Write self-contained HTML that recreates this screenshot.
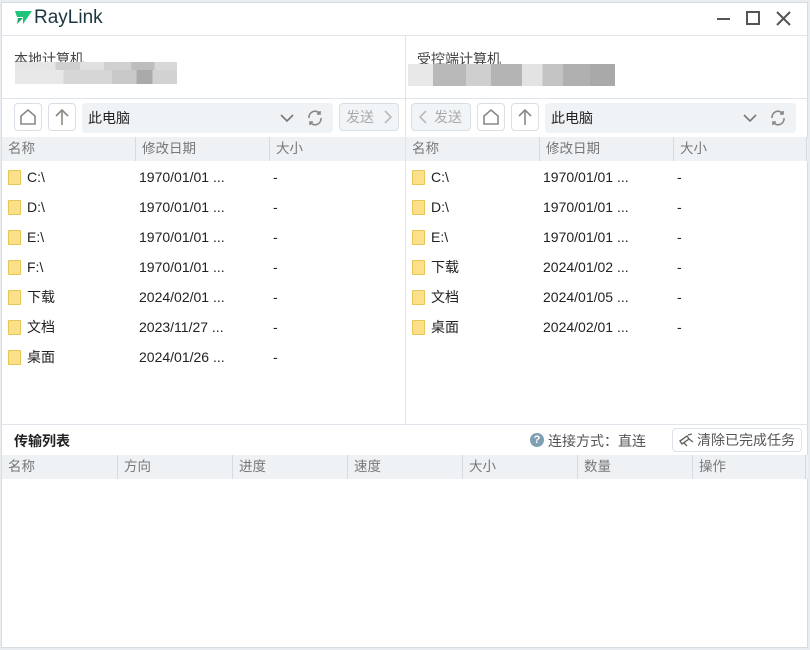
<!DOCTYPE html>
<html><head><meta charset="utf-8"><style>
*{margin:0;padding:0;box-sizing:border-box}
body{width:810px;height:650px;background:#e9edf0;font-family:"Liberation Sans","Noto Sans CJK SC",sans-serif;position:relative;overflow:hidden;font-size:14px;color:#222}
.win{position:absolute;left:1px;top:2px;width:807px;height:646px;background:#fff;border:1px solid #d6dde2}
.a{position:absolute;white-space:nowrap}
.hl{position:absolute;height:1px;background:#dfe5ea}
.vl{position:absolute;width:1px;background:#dfe5ea}
.btn{position:absolute;width:28px;height:28px;border:1px solid #d9dfe4;border-radius:4px;background:#fff;white-space:nowrap}
.path{position:absolute;height:30px;background:#f0f3f6;border-radius:4px;font-size:14px;line-height:30px;padding-left:6px;color:#222}
.hdr{position:absolute;height:24px;background:#eef2f5;font-size:13.5px;color:#777;line-height:24px}
.hdr span{position:absolute;top:0;height:24px;border-left:1px solid #d5dbe0;padding-left:6px;white-space:nowrap}
.row{position:absolute;height:30px;width:400px;font-size:14px;line-height:30px;color:#222}
.row i{position:absolute;left:6px;top:8px;width:13px;height:15px;background:#fbe08a;border:1px solid #e7c557;border-radius:1px}
.row b,.row u,.row s{white-space:nowrap;font-weight:normal;text-decoration:none;position:absolute;top:0}
.row b{left:25px}
.row u{left:137px}
.row s{left:271px}
.pix{position:absolute;height:15px}
</style></head><body>
<div class="win"></div>
<svg class="a" style="left:15px;top:11px" width="18" height="14" viewBox="0 0 18 14"><path d="M0 0H17L8 13L8 6L2 6Z" fill="#1fc47a"/><path d="M3 7L8 7L2 13Z" fill="#14a864"/></svg>
<div class="a" style="left:34px;top:7px;font-size:19px;color:#1d3540;font-weight:500">RayLink</div>
<div class="a" style="left:717px;top:18px;width:13px;height:2px;background:#555"></div>
<div class="a" style="left:746px;top:11px;width:14px;height:14px;border:2px solid #555"></div>
<svg class="a" style="left:776px;top:11px" width="15" height="15"><path d="M1 1L14 14M14 1L1 14" stroke="#555" stroke-width="2"/></svg>
<div class="hl" style="left:2px;top:35px;width:806px"></div>
<div class="vl" style="left:405px;top:36px;height:388px"></div>
<div class="a" style="left:14px;top:49px;font-size:14px;color:#444">本地计算机</div>
<div class="pix" style="left:15px;top:62px;width:162px;background:linear-gradient(90deg,#e6e6e6 0 25%,#cfcfcf 25% 40%,#e0e0e0 40% 55%,#d0d0d0 55% 72%,#bdbdbd 72% 86%,#d8d8d8 86%)"></div>
<div class="pix" style="left:15px;top:70px;width:162px;height:14px;background:linear-gradient(90deg,#e8e8e8 0 30%,#d6d6d6 30% 60%,#c9c9c9 60% 75%,#aaa 75% 85%,#d2d2d2 85%)"></div>
<div class="a" style="left:417px;top:49px;font-size:14px;color:#444">受控端计算机</div>
<div class="pix" style="left:408px;top:64px;width:207px;height:22px;background:linear-gradient(90deg,#e8e8e8 0 12%,#b9b9b9 12% 28%,#cfcfcf 28% 40%,#b4b4b4 40% 55%,#e3e3e3 55% 65%,#c4c4c4 65% 75%,#b0b0b0 75% 88%,#a9a9a9 88%)"></div>
<div class="hl" style="left:2px;top:98px;width:806px"></div>
<div class="btn" style="left:14px;top:103px"><svg width="26" height="26"><path d="M6 12L13 6L20 12V20H6Z" fill="none" stroke="#888" stroke-width="1.6"/></svg></div>
<div class="btn" style="left:48px;top:103px"><svg width="26" height="26"><path d="M13 21V6M7 12L13 6L19 12" fill="none" stroke="#888" stroke-width="1.6"/></svg></div>
<div class="path" style="left:82px;top:103px;width:251px">此电脑
<svg class="a" style="left:198px;top:9px" width="14" height="12"><path d="M1 3L7 9L13 3" fill="none" stroke="#777" stroke-width="1.6"/></svg>
<svg class="a" style="left:224px;top:6px" width="18" height="18"><path d="M3 9A6 6 0 0 1 14 5M15 9A6 6 0 0 1 4 13M14 2V5H11M4 16V13H7" fill="none" stroke="#888" stroke-width="1.6"/></svg></div>
<div class="btn" style="left:339px;top:103px;width:60px;background:#f2f5f7;color:#aaa;font-size:14px;line-height:26px;padding-left:6px">发送<svg class="a" style="left:42px;top:6px" width="12" height="14"><path d="M3 1L9 7L3 13" fill="none" stroke="#bbb" stroke-width="1.6"/></svg></div>
<div class="btn" style="left:411px;top:103px;width:60px;background:#f2f5f7;color:#aaa;font-size:14px;line-height:26px;padding-left:22px"><svg class="a" style="left:5px;top:6px" width="12" height="14"><path d="M9 1L3 7L9 13" fill="none" stroke="#bbb" stroke-width="1.6"/></svg>发送</div>
<div class="btn" style="left:477px;top:103px"><svg width="26" height="26"><path d="M6 12L13 6L20 12V20H6Z" fill="none" stroke="#888" stroke-width="1.6"/></svg></div>
<div class="btn" style="left:511px;top:103px"><svg width="26" height="26"><path d="M13 21V6M7 12L13 6L19 12" fill="none" stroke="#888" stroke-width="1.6"/></svg></div>
<div class="path" style="left:545px;top:103px;width:251px">此电脑
<svg class="a" style="left:198px;top:9px" width="14" height="12"><path d="M1 3L7 9L13 3" fill="none" stroke="#777" stroke-width="1.6"/></svg>
<svg class="a" style="left:224px;top:6px" width="18" height="18"><path d="M3 9A6 6 0 0 1 14 5M15 9A6 6 0 0 1 4 13M14 2V5H11M4 16V13H7" fill="none" stroke="#888" stroke-width="1.6"/></svg></div>
<div class="hdr" style="left:2px;top:137px;width:403px"><span style="left:0;border:0">名称</span><span style="left:133px">修改日期</span><span style="left:267px">大小</span></div>
<div class="hdr" style="left:406px;top:137px;width:402px"><span style="left:0;border:0">名称</span><span style="left:133px">修改日期</span><span style="left:267px">大小</span><span style="left:400px"></span></div>
<div class="row" style="left:2px;top:162px"><i></i><b>C:\</b><u>1970/01/01 ...</u><s>-</s></div>
<div class="row" style="left:2px;top:192px"><i></i><b>D:\</b><u>1970/01/01 ...</u><s>-</s></div>
<div class="row" style="left:2px;top:222px"><i></i><b>E:\</b><u>1970/01/01 ...</u><s>-</s></div>
<div class="row" style="left:2px;top:252px"><i></i><b>F:\</b><u>1970/01/01 ...</u><s>-</s></div>
<div class="row" style="left:2px;top:282px"><i></i><b>下载</b><u>2024/02/01 ...</u><s>-</s></div>
<div class="row" style="left:2px;top:312px"><i></i><b>文档</b><u>2023/11/27 ...</u><s>-</s></div>
<div class="row" style="left:2px;top:342px"><i></i><b>桌面</b><u>2024/01/26 ...</u><s>-</s></div>
<div class="row" style="left:406px;top:162px"><i></i><b>C:\</b><u>1970/01/01 ...</u><s>-</s></div>
<div class="row" style="left:406px;top:192px"><i></i><b>D:\</b><u>1970/01/01 ...</u><s>-</s></div>
<div class="row" style="left:406px;top:222px"><i></i><b>E:\</b><u>1970/01/01 ...</u><s>-</s></div>
<div class="row" style="left:406px;top:252px"><i></i><b>下载</b><u>2024/01/02 ...</u><s>-</s></div>
<div class="row" style="left:406px;top:282px"><i></i><b>文档</b><u>2024/01/05 ...</u><s>-</s></div>
<div class="row" style="left:406px;top:312px"><i></i><b>桌面</b><u>2024/02/01 ...</u><s>-</s></div>
<div class="hl" style="left:2px;top:424px;width:806px"></div>
<div class="a" style="left:14px;top:431px;font-size:14px;font-weight:bold;color:#222">传输列表</div>
<div class="a" style="left:530px;top:433px;width:14px;height:14px;border-radius:50%;background:#7f9fb2;color:#fff;font-size:11px;line-height:14px;text-align:center;font-weight:bold">?</div>
<div class="a" style="left:548px;top:431px;font-size:14px;color:#555">连接方式：直连</div>
<div class="a" style="left:672px;top:428px;width:130px;height:24px;border:1px solid #dde3e8;border-radius:4px;font-size:14px;color:#555;line-height:22px;padding-left:24px">清除已完成任务
<svg class="a" style="left:5px;top:4px" width="16" height="14"><path d="M2 8L9 3L11 6L4 11ZM10 2L14 1M11 6L15 9M6 10L9 13" fill="none" stroke="#666" stroke-width="1.4"/></svg></div>
<div class="hdr" style="left:2px;top:455px;width:806px"><span style="left:0;border:0">名称</span><span style="left:115px">方向</span><span style="left:230px">进度</span><span style="left:345px">速度</span><span style="left:460px">大小</span><span style="left:575px">数量</span><span style="left:690px">操作</span><span style="left:803px"></span></div>
</body></html>
